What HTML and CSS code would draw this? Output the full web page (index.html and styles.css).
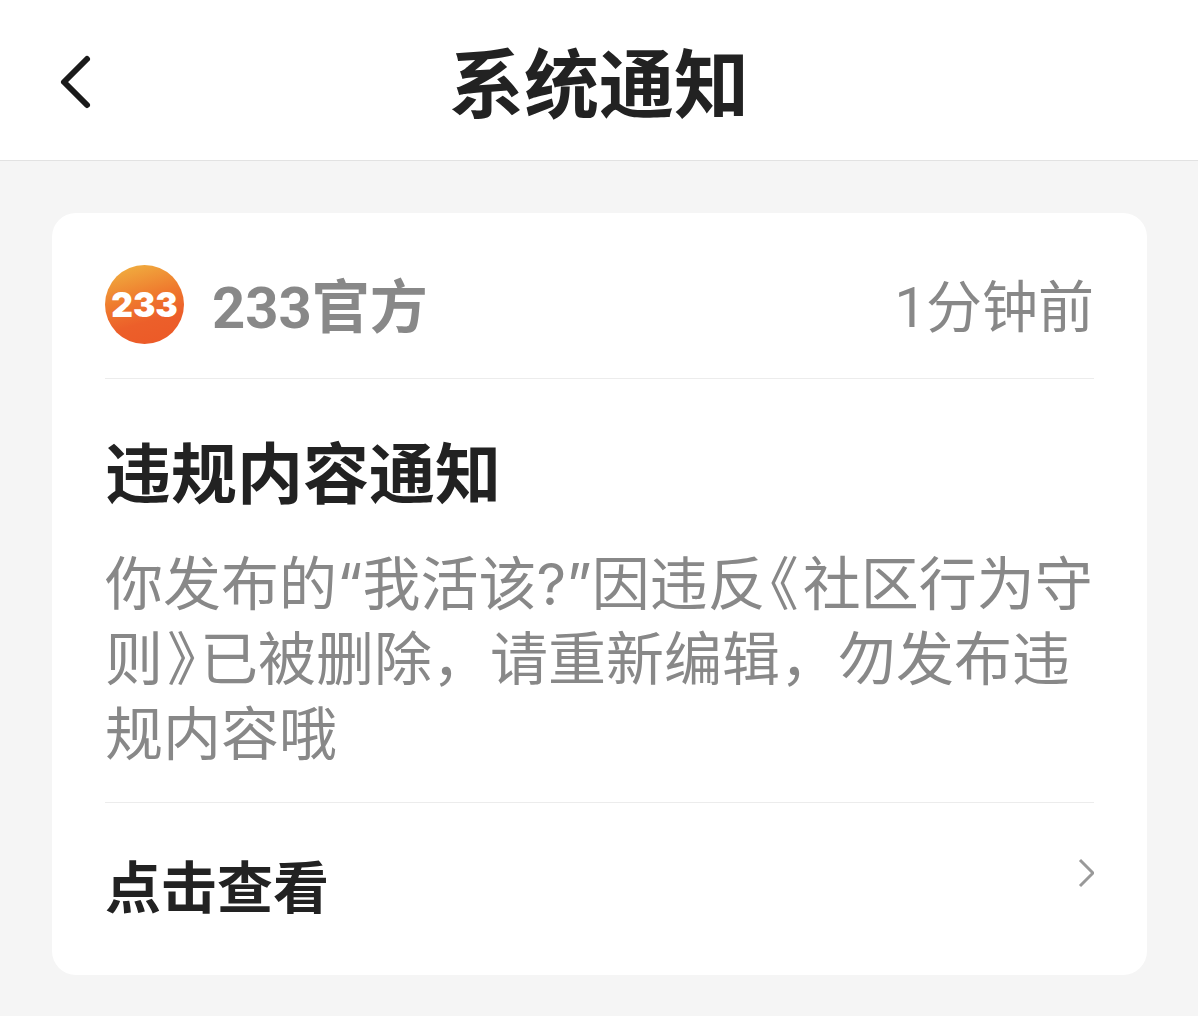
FILE: index.html
```
<!DOCTYPE html>
<html lang="zh-CN">

<head>
    <meta charset="UTF-8">
    <meta name="viewport" content="width=device-width, initial-scale=1.0">
    <title>系统通知</title>
    <link rel="stylesheet" href="styles.css">
</head>

<body>
    <header class="topbar">
        <button type="button" class="back" aria-label="返回">
            <svg width="40" height="56" viewBox="0 0 40 56">
                <path d="M31 5 L8 28 L31 51" />
            </svg>
        </button>
        <h1>系统通知</h1>
    </header>

    <main>
        <article class="card">
            <div class="sender">
                <svg class="avatar" viewBox="0 0 80 80" role="img" aria-label="233">
                    <defs>
                        <linearGradient id="orange" x1="0.2" y1="0" x2="0.5" y2="1">
                            <stop offset="0" stop-color="#f0b040" />
                            <stop offset="0.45" stop-color="#ef7a2e" />
                            <stop offset="0.75" stop-color="#ec5f2a" />
                            <stop offset="1" stop-color="#ec5b28" />
                        </linearGradient>
                    </defs>
                    <circle cx="40" cy="40" r="40" fill="url(#orange)" />
                    <text x="40" y="53" text-anchor="middle">233</text>
                </svg>
                <span class="name">233官方</span>
                <time class="time">1分钟前</time>
            </div>

            <div class="content">
                <h2>违规内容通知</h2>
                <p>你发布的“我活该?”因违反<span class="mark">《</span>社区行为守则<span class="mark">》</span>已被删除，请重新编辑，勿发布违规内容哦</p>
            </div>

            <a class="more" href="#">
                <span>点击查看</span>
                <svg width="20" height="52" viewBox="0 0 20 52">
                    <path d="M6 13 L19 26 L6 39" />
                </svg>
            </a>
        </article>
    </main>
</body>

</html>
```

FILE: styles.css
```
* {
    box-sizing: border-box;
}

body {
    margin: 0;
    background: #f5f5f5;
    color: #222;
    font-family: Roboto, "Noto Sans CJK SC", sans-serif;
}

h1,
h2,
p {
    margin: 0;
}

.topbar {
    display: grid;
    grid-template-columns: 100px 1fr 100px;
    align-items: center;
    height: 161px;
    background: #fff;
    border-bottom: 1px solid #e2e2e2;
}

.topbar h1 {
    font-size: 75px;
    line-height: 100px;
    padding-top: 12px;
    text-align: center;
}

.back {
    display: flex;
    justify-content: flex-end;
    padding: 8px 4px 4px;
    border: 0;
    background: none;
    cursor: pointer;
}

.back path {
    fill: none;
    stroke: #1a1a1a;
    stroke-width: 6;
    stroke-linecap: round;
    stroke-linejoin: round;
}

main {
    padding: 52px 51px 40px 52px;
}

.card {
    padding: 0 53px;
    background: #fff;
    border-radius: 24px;
}

.sender {
    display: flex;
    align-items: flex-start;
    padding: 52px 0 27px;
    border-bottom: 1px solid #ececec;
    color: #888;
    font-size: 56px;
    line-height: 86px;
}

.avatar {
    width: 79px;
    height: 79px;
    margin-right: 28px;
}

.avatar text {
    fill: #fff;
    font: 900 34px Inter, sans-serif;
}

.name {
    font-size: 58px;
    font-weight: 700;
}

.time {
    margin-left: auto;
}

.content {
    padding: 57px 0 30px;
    border-bottom: 1px solid #ececec;
}

.content h2 {
    margin-bottom: 31px;
    font-size: 66px;
    line-height: 80px;
}

.content p {
    color: #888;
    font-family: Inter, "Noto Sans CJK SC", sans-serif;
    font-size: 58px;
    line-height: 75px;
}

/* half-width book title marks */
.mark {
    margin: 0 4px;
    font-feature-settings: "halt";
}

.more {
    display: flex;
    align-items: flex-start;
    justify-content: space-between;
    padding: 44px 0;
    color: #222;
    font-size: 56px;
    font-weight: 700;
    line-height: 84px;
    text-decoration: none;
}

.more path {
    fill: none;
    stroke: #999;
    stroke-width: 3;
}
```
